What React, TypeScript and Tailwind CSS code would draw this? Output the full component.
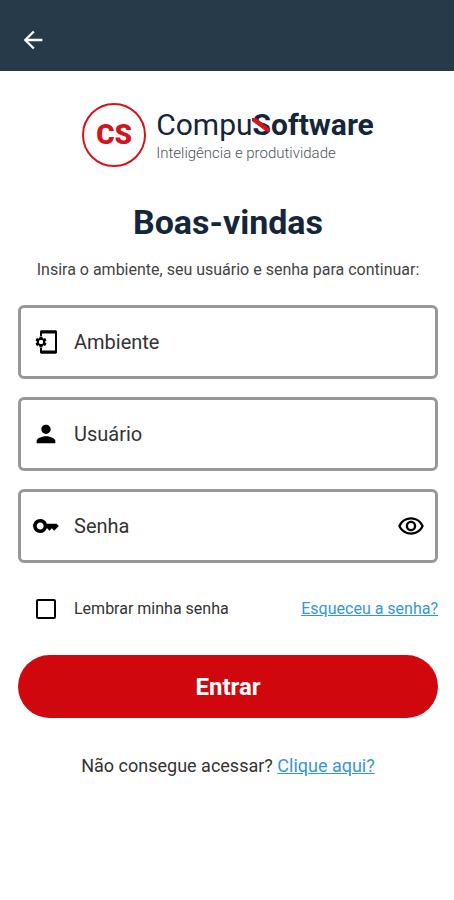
import { useState, type ReactNode } from "react";
import {
  MdArrowBack,
  MdKey,
  MdOutlineRemoveRedEye,
  MdPerson,
  MdSettings,
} from "react-icons/md";

interface FieldProps {
  id: string;
  label: string;
  icon: ReactNode;
  type?: string;
  children?: ReactNode;
}

const Field = ({ id, label, icon, type = "text", children }: FieldProps) => (
  <div className="flex h-[74px] items-center rounded-md border-3 border-[#999797] bg-white pr-[10px]">
    <label htmlFor={id} className="flex w-[49px] shrink-0 justify-center">
      {icon}
    </label>
    <input
      id={id}
      type={type}
      aria-label={label}
      placeholder={label}
      className="h-full min-w-0 flex-1 bg-transparent pl-1 text-xl text-[#222] outline-none placeholder:text-[#333]"
    />
    {children}
  </div>
);

// phone outline, open on the left where the gear sits
const EnvironmentIcon = () => (
  <svg viewBox="0 0 28 28" width={28} height={28} aria-hidden="true">
    <path
      d="M9 8V3.5h15v21H9V20"
      fill="none"
      stroke="#000"
      strokeWidth="2"
      strokeLinejoin="round"
    />
    <path d="M9 2.5h15v3H9zM9 22.5h15v3H9z" fill="#000" />
    <MdSettings x={2} y={7} size={14} />
    <circle cx="9" cy="14" r="2" fill="#fff" />
  </svg>
);

const Logo = () => (
  <div className="flex items-center justify-center gap-[10px]">
    <div className="flex size-16 items-center justify-center rounded-full border-2 border-[#d4141c] text-[28px] leading-none font-black text-[#d4141c]">
      CS
    </div>
    <div>
      <p className="text-[30px] leading-9 text-[#14263a]">
        Compu
        <span className="relative font-bold">
          Software
          <svg
            viewBox="0 0 18 16"
            className="absolute top-[10px] -left-px h-4 w-[18px]"
            aria-hidden="true"
          >
            <path d="M0 1h4l14 11v3h-3L0 4z" fill="#d4141c" />
          </svg>
        </span>
      </p>
      <p className="text-[15px] leading-5 font-light text-[#4c5660]">
        Inteligência e produtividade
      </p>
    </div>
  </div>
);

const App = () => {
  const [showPassword, setShowPassword] = useState(false);

  return (
    <div className="min-h-screen bg-white font-['Roboto',sans-serif]">
      <header className="flex h-[71px] items-center bg-[#273a4a] px-[19px] pt-2">
        <button type="button" aria-label="Voltar" className="text-white">
          <MdArrowBack size={28} />
        </button>
      </header>

      <main className="pt-8 pr-4 pl-[18px]">
        <Logo />

        <h1 className="mt-[35px] text-center text-[34px] leading-10 font-bold text-[#14263a]">
          Boas-vindas
        </h1>
        <p className="mt-4 text-center text-base leading-6 text-[#444]">
          Insira o ambiente, seu usuário e senha para continuar:
        </p>

        <form className="mt-[23px]" onSubmit={(e) => e.preventDefault()}>
          <div className="flex flex-col gap-[18px]">
            <Field id="ambiente" label="Ambiente" icon={<EnvironmentIcon />} />
            <Field id="usuario" label="Usuário" icon={<MdPerson size={28} />} />
            <Field
              id="senha"
              label="Senha"
              type={showPassword ? "text" : "password"}
              icon={<MdKey size={28} />}
            >
              <button
                type="button"
                aria-label="Mostrar senha"
                onClick={() => setShowPassword(!showPassword)}
              >
                <MdOutlineRemoveRedEye size={28} />
              </button>
            </Field>
          </div>

          <div className="mt-[34px] flex items-center justify-between">
            <label className="flex items-center text-base leading-6 text-[#333]">
              <input
                type="checkbox"
                className="mr-[18px] ml-[18px] size-5 appearance-none rounded-xs border-2 border-black checked:bg-black"
              />
              Lembrar minha senha
            </label>
            <a
              href="#senha"
              className="text-base leading-6 text-[#3497db] underline"
            >
              Esqueceu a senha?
            </a>
          </div>

          <button
            type="submit"
            className="mt-[34px] h-[63px] w-full rounded-full bg-[#d0080e] text-2xl font-bold text-white"
          >
            Entrar
          </button>
        </form>

        <p className="mt-9 text-center text-lg leading-6 text-[#333]">
          Não consegue acessar?{" "}
          <a href="#ajuda" className="text-[#3497db] underline">
            Clique aqui?
          </a>
        </p>
      </main>
    </div>
  );
};

export default App;
